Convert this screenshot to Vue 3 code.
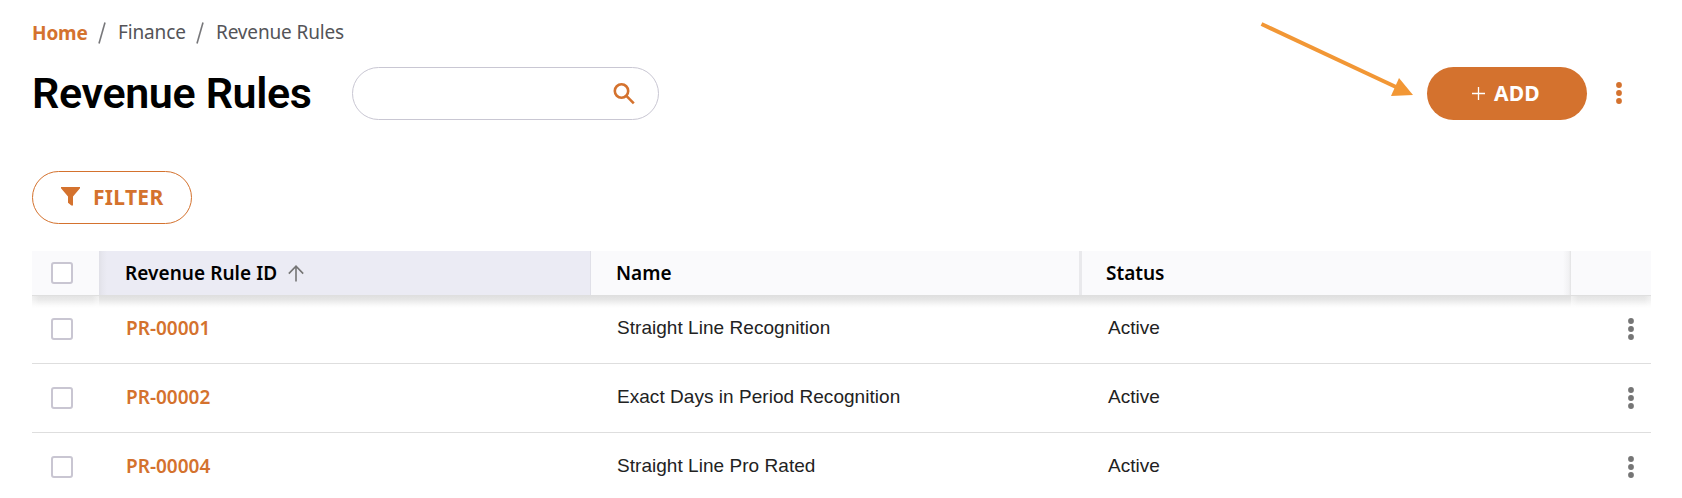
<script setup>
const rules = [
  { id: 'PR-00001', name: 'Straight Line Recognition', status: 'Active' },
  { id: 'PR-00002', name: 'Exact Days in Period Recognition', status: 'Active' },
  { id: 'PR-00004', name: 'Straight Line Pro Rated', status: 'Active' },
];
</script>

<template>
  <div class="page">
    <nav class="breadcrumb">
      <a class="home">Home</a>
      <svg class="slash" viewBox="0 0 8 22"><path d="M7 0.5L1 21.5"/></svg>
      <span class="finance">Finance</span>
      <svg class="slash" viewBox="0 0 8 22"><path d="M7 0.5L1 21.5"/></svg>
      <span class="current">Revenue Rules</span>
    </nav>

    <header class="header">
      <h1 class="title">Revenue Rules</h1>
      <div class="search">
        <svg class="search-icon" viewBox="0 0 22 22">
          <circle cx="8.5" cy="8" r="6.7"/>
          <path d="M13.4 12.9L20.8 20.3"/>
        </svg>
      </div>
      <button class="add">
        <svg class="plus" viewBox="0 0 13 13"><path d="M6.5 0V13M0 6.5H13"/></svg>
        <span>ADD</span>
      </button>
      <svg class="dots orange" viewBox="0 0 6 22">
        <circle cx="3" cy="3" r="2.9"/><circle cx="3" cy="11" r="2.9"/><circle cx="3" cy="19" r="2.9"/>
      </svg>
    </header>

    <button class="filter">
      <svg class="funnel" viewBox="0 0 19 19"><path d="M0 0H19V1.2L12 9.5V18.6H10.4L7 15.8V9.5L0 1.2Z"/></svg>
      <span>FILTER</span>
    </button>

    <div class="table">
      <div class="row head">
        <div class="cell check"><span class="checkbox"></span></div>
        <div class="cell sorted">
          <span class="label-id">Revenue Rule ID</span>
          <svg class="sort" viewBox="0 0 16 17"><path d="M8 16.5V1.2M0.8 8.6L8 1.2L15.2 8.6"/></svg>
        </div>
        <div class="cell name-head"><span class="label-name">Name</span></div>
        <div class="cell status-head"><span class="label-status">Status</span></div>
        <div class="cell last"></div>
      </div>
      <div v-for="rule in rules" :key="rule.id" class="row body">
        <div class="cell check"><span class="checkbox"></span></div>
        <div class="cell id"><a>{{ rule.id }}</a></div>
        <div class="cell text">{{ rule.name }}</div>
        <div class="cell text status">{{ rule.status }}</div>
        <div class="cell menu">
          <svg class="dots" viewBox="0 0 6 22">
            <circle cx="3" cy="3" r="2.9"/><circle cx="3" cy="11" r="2.9"/><circle cx="3" cy="19" r="2.9"/>
          </svg>
        </div>
      </div>
    </div>

    <!-- pointer laid over the page, towards the add button -->
    <svg class="arrow" viewBox="0 0 154 76">
      <path class="line" d="M1.5 2L136 65"/>
      <path class="tip" d="M153 73L139 56L131 74Z"/>
    </svg>
  </div>
</template>

<style>
body {
  margin: 0;
  background: #fff;
  overflow: hidden;
}
</style>

<style scoped>
.page {
  position: relative;
  box-sizing: border-box;
  height: 498px;
  padding: 20px 31px 0 32px;
  overflow: hidden;
  font-family: "Noto Sans", sans-serif;
  color: #000;
}

.breadcrumb {
  display: flex;
  align-items: center;
  height: 26px;
  font-size: 19px;
  line-height: 26px;
  letter-spacing: -0.15px;
  color: #545458;
  white-space: nowrap;
}

.home {
  width: 66px;
  font-weight: 700;
  color: #d4722e;
}

.finance {
  width: 78px;
  margin: 0 0 2px 12px;
}

.current {
  margin: 0 0 2px 12px;
}

.slash {
  width: 8px;
  height: 22px;
  fill: none;
  stroke: #77777a;
  stroke-width: 1.6;
}

.header {
  display: flex;
  align-items: center;
  height: 53px;
  margin-top: 21px;
}

.title {
  width: 320px;
  margin: 0;
  font-family: Roboto, sans-serif;
  font-size: 43px;
  font-weight: 600;
  line-height: 53px;
  letter-spacing: -0.35px;
  white-space: nowrap;
}

.search {
  display: flex;
  align-items: center;
  justify-content: flex-end;
  box-sizing: border-box;
  width: 307px;
  height: 53px;
  padding-right: 23px;
  border: 1px solid #c9c7d3;
  border-radius: 27px;
}

.search-icon {
  width: 22px;
  height: 22px;
  fill: none;
  stroke: #d4722e;
  stroke-width: 2.6;
}

.add {
  display: flex;
  align-items: center;
  box-sizing: border-box;
  width: 160px;
  height: 53px;
  margin-left: auto;
  padding: 0 0 0 45px;
  border: 0;
  border-radius: 27px;
  background: #d4722e;
  color: #fff;
  font: 700 21px/27px "Noto Sans", sans-serif;
  letter-spacing: 0.2px;
}

.plus {
  width: 13px;
  height: 13px;
  margin-right: 9px;
  fill: none;
  stroke: #fff;
  stroke-width: 1.3;
}

.dots {
  width: 6px;
  height: 22px;
  fill: #757575;
}

.dots.orange {
  margin: 0 29px 1px 29px;
  fill: #d4722e;
}

.filter {
  display: flex;
  align-items: center;
  box-sizing: border-box;
  width: 160px;
  height: 53px;
  margin-top: 51px;
  padding: 0 0 0 28px;
  border: 1px solid #d4722e;
  border-radius: 27px;
  background: #fff;
  color: #d4722e;
  font: 700 21px/27px "Noto Sans", sans-serif;
  letter-spacing: 0.3px;
}

.funnel {
  width: 19px;
  height: 19px;
  margin: 0 13px 3px 0;
  fill: #d4722e;
}

.table {
  margin-top: 27px;
}

.row {
  display: grid;
  grid-template-columns: 67px 492px 491px 489px 80px;
}

.cell {
  display: flex;
  align-items: center;
  box-sizing: border-box;
}

.head {
  position: relative;
  height: 44px;
  background: #fafafc;
  font-size: 19px;
  font-weight: 600;
  white-space: nowrap;
}

/* soft shadow under the header */
.head::after {
  content: "";
  position: absolute;
  top: 44px;
  left: 0;
  right: 0;
  height: 13px;
  background: linear-gradient(#dedede, #e6e6e6 35%, #fafafa 80%, #fff);
}

/* the pinned columns' shadow fades out towards their sides */
.head .check::after,
.head .last::after {
  content: "";
  position: absolute;
  z-index: 1;
  top: 45px;
  left: 0;
  width: 67px;
  height: 12px;
  background: linear-gradient(90deg, rgba(255, 255, 255, 0.5), rgba(255, 255, 255, 0.15) 7px, rgba(255, 255, 255, 0.15) calc(100% - 7px), rgba(255, 255, 255, 0.5));
}

.head .last::after {
  left: auto;
  right: 0;
  width: 80px;
}

.label-id {
  letter-spacing: 0.05px;
}

.sorted {
  padding-left: 26px;
  border-right: 1px solid #e0e0e8;
  background: linear-gradient(90deg, #e0e0e7, #e6e6ee 3px, #ebebf4 8px);
}

.sort {
  width: 16px;
  height: 17px;
  margin-left: 11px;
  fill: none;
  stroke: #757575;
  stroke-width: 1.6;
}

.name-head {
  padding-left: 25px;
  border-right: 3px solid #e9e9ec;
}

.status-head {
  padding-left: 24px;
  background: linear-gradient(270deg, #e2e2e3, #f1f1f3 2px, #fafafc 8px);
}

.check {
  padding-left: 19px;
}

.checkbox {
  box-sizing: border-box;
  width: 22px;
  height: 22px;
  border: 2px solid #c9c6d2;
  border-radius: 3px;
  background: #fff;
}

.body {
  height: 69px;
}

.body .cell {
  border-bottom: 1px solid #dedede;
}

.id {
  padding: 0 0 2px 27px;
  color: #d4722e;
  font-size: 19px;
  font-weight: 650;
}

.text {
  padding: 0 0 2px 26px;
  color: #222;
  font-family: "Liberation Sans", sans-serif;
  font-size: 19px;
  letter-spacing: 0.04px;
}

.menu {
  padding: 0 0 0 57px;
}

.arrow {
  position: absolute;
  top: 22px;
  left: 1260px;
  width: 154px;
  height: 76px;
  fill: none;
}

.line {
  stroke: #f29735;
  stroke-width: 4;
}

.tip {
  fill: #f29735;
}
</style>
